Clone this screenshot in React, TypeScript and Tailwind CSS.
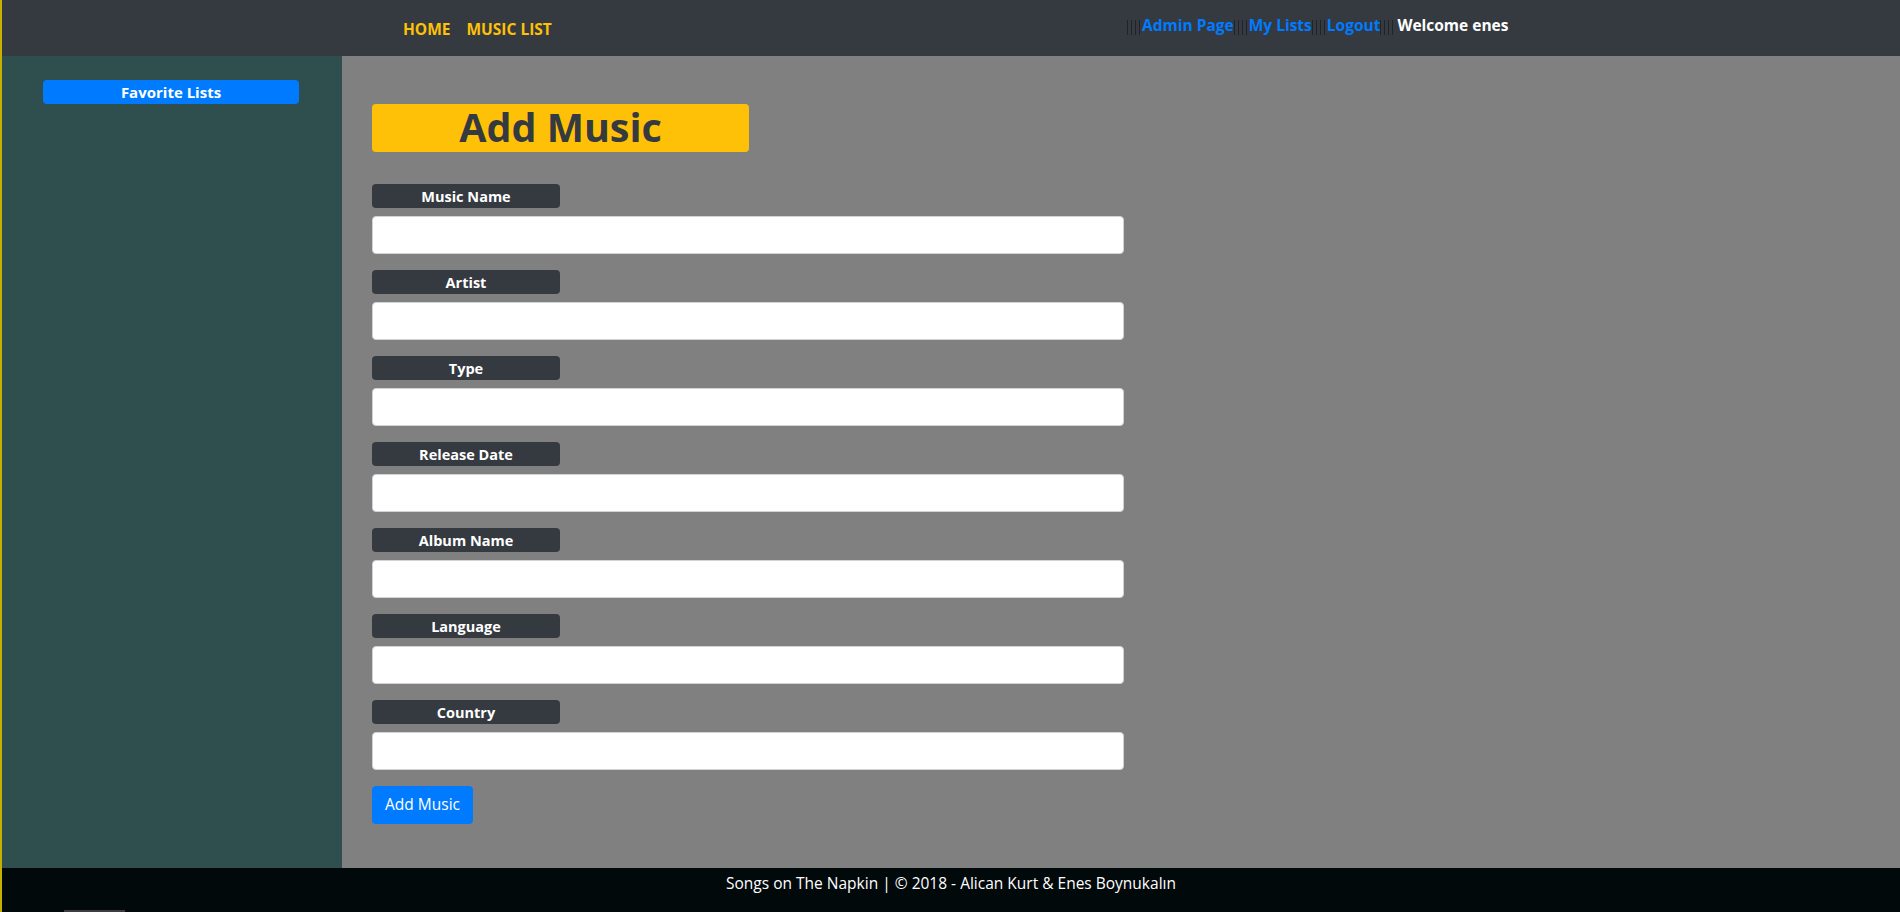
import React from 'react'

const fields = ['Music Name', 'Artist', 'Type', 'Release Date', 'Album Name', 'Language', 'Country']

const Bars = () => (
  <span className="flex items-center gap-[3px] h-[15px] mr-[2px] mt-[2px]">
    <span className="w-px h-full bg-[#202428]" />
    <span className="w-px h-full bg-[#202428]" />
    <span className="w-px h-full bg-[#202428]" />
    <span className="w-px h-full bg-[#202428]" />
  </span>
)

const App: React.FC = () => {
  return (
    <div
      className="relative min-h-[940px] border-l-2 border-[#c7b100] bg-[#808080]"
      style={{ fontFamily: '"Open Sans", "Noto Sans", sans-serif' }}
    >
      {/* Top navbar */}
      <div className="h-[56px] bg-[#343a40] flex">
        <div className="w-[401px] shrink-0" />
        <div className="w-[724px] shrink-0 flex items-center gap-[16px] pt-[3px] text-[15.5px] font-bold text-[#ffc107]">
          <span>HOME</span>
          <span>MUSIC LIST</span>
        </div>
        <div className="flex items-center pb-[4px] text-[15.5px] font-bold">
          <Bars />
          <span className="text-[#007bff]">Admin Page</span>
          <Bars />
          <span className="text-[#007bff]">My Lists</span>
          <Bars />
          <span className="text-[#007bff]">Logout</span>
          <Bars />
          <span className="text-white ml-[2px]">Welcome enes</span>
        </div>
      </div>

      <div className="flex min-h-[812px]">
        {/* Sidebar */}
        <div className="w-[340px] shrink-0 bg-[#2f4f4f] pl-[41px] pr-[43px] pt-[24px]">
          <div className="h-[24px] pt-[1px] rounded-[4px] bg-[#007bff] text-white text-[15px] font-bold flex items-center justify-center">
            Favorite Lists
          </div>
        </div>

        {/* Main content */}
        <div className="flex-1 pl-[30px] pt-[48px] pb-[44px]">
          <div className="w-[377px] h-[48px] rounded-[4px] bg-[#ffc107] flex items-center justify-center">
            <h1 className="text-[39.5px] font-bold text-[#343a40] leading-none">Add Music</h1>
          </div>

          <div className="mt-[32px] flex flex-col gap-[16px]">
            {fields.map(f => (
              <div key={f} className="flex flex-col gap-[8px]">
                <div className="w-[188px] h-[24px] pt-[2px] rounded-[4px] bg-[#343a40] text-white text-[14.5px] font-bold flex items-center justify-center">
                  {f}
                </div>
                <input
                  type="text"
                  className="w-[752px] h-[38px] rounded-[4px] bg-white border border-[#ced4da] px-3 outline-none"
                />
              </div>
            ))}
          </div>

          <button className="mt-[16px] w-[101px] h-[38px] rounded-[4px] bg-[#007bff] text-white text-[15.5px] flex items-center justify-center">
            Add Music
          </button>
        </div>
      </div>

      {/* Footer */}
      <div className="h-[72px] bg-[#01090b] flex justify-center pt-[4px]">
        <span className="text-white text-[15.5px]">Songs on The Napkin | © 2018 - Alican Kurt &amp; Enes Boynukalın</span>
      </div>

      <div className="absolute left-[62px] top-[910px] w-[61px] h-[2px] bg-[#3d3d40]" />
    </div>
  )
}

export default App
